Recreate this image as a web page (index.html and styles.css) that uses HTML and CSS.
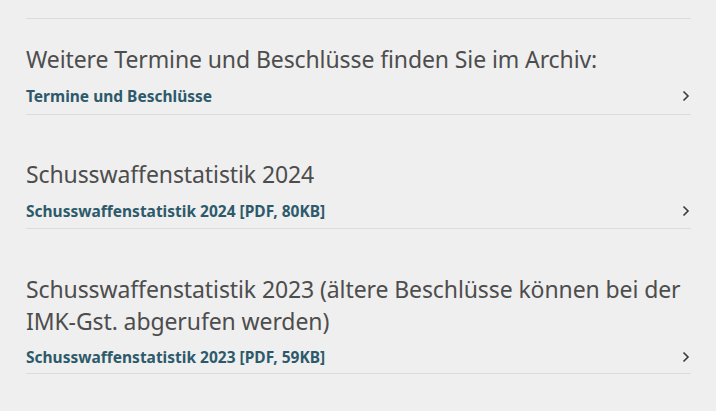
FILE: index.html
```html
<!DOCTYPE html>
<html lang="de">
<head>
  <meta charset="UTF-8" />
  <meta name="viewport" content="width=device-width, initial-scale=1.0" />
  <title>Beschlüsse und Statistik</title>
  <link rel="stylesheet" href="styles.css">
</head>
<body>
  <div class="content">
    <div class="previous"></div>

    <div class="download-block first">
      <h2>Weitere Termine und Beschlüsse finden Sie im Archiv:</h2>
      <a class="link-row" href="#">
        <span>Termine und Beschlüsse</span>
        <svg class="chevron" viewBox="0 0 8 12" width="8" height="12"><path d="M1.5 1.5 L6 6 L1.5 10.5" /></svg>
      </a>
    </div>

    <div class="download-block">
      <h2>Schusswaffenstatistik 2024</h2>
      <a class="link-row" href="#">
        <span>Schusswaffenstatistik 2024 [PDF, 80KB]</span>
        <svg class="chevron" viewBox="0 0 8 12" width="8" height="12"><path d="M1.5 1.5 L6 6 L1.5 10.5" /></svg>
      </a>
    </div>

    <div class="download-block">
      <h2>Schusswaffenstatistik 2023 (ältere Beschlüsse können bei der IMK-Gst. abgerufen werden)</h2>
      <a class="link-row" href="#">
        <span>Schusswaffenstatistik 2023 [PDF, 59KB]</span>
        <svg class="chevron" viewBox="0 0 8 12" width="8" height="12"><path d="M1.5 1.5 L6 6 L1.5 10.5" /></svg>
      </a>
    </div>
  </div>
</body>
</html>
```

FILE: styles.css
```css
body {
  margin: 0;
  background: #efefef;
  font-family: "Noto Sans", "Open Sans", sans-serif;
}
.content {
  padding: 0 25px 0 26px;
}
.previous {
  height: 18px;
  border-bottom: 1px solid #dcdcdc;
}
.download-block {
  margin-top: 43px;
}
.download-block.first {
  margin-top: 24px;
}
.download-block:last-child {
  margin-top: 44px;
}
h2 {
  margin: 0;
  font-size: 23px;
  line-height: 32px;
  font-weight: 400;
  letter-spacing: -0.1px;
  color: #4d4d4d;
}
.link-row {
  display: flex;
  justify-content: space-between;
  align-items: center;
  margin-top: 10px;
  padding-bottom: 6px;
  border-bottom: 1px solid #dcdcdc;
  font-size: 15.5px;
  line-height: 22px;
  font-weight: 700;
  color: #2d5a6b;
  text-decoration: none;
}
.download-block.first .link-row {
  padding-bottom: 7px;
}
.download-block:last-child .link-row {
  margin-top: 9px;
  padding-bottom: 5px;
}
.chevron {
  margin-right: 1px;
}
.chevron path {
  fill: none;
  stroke: #3a3a3a;
  stroke-width: 1.6;
}
```
